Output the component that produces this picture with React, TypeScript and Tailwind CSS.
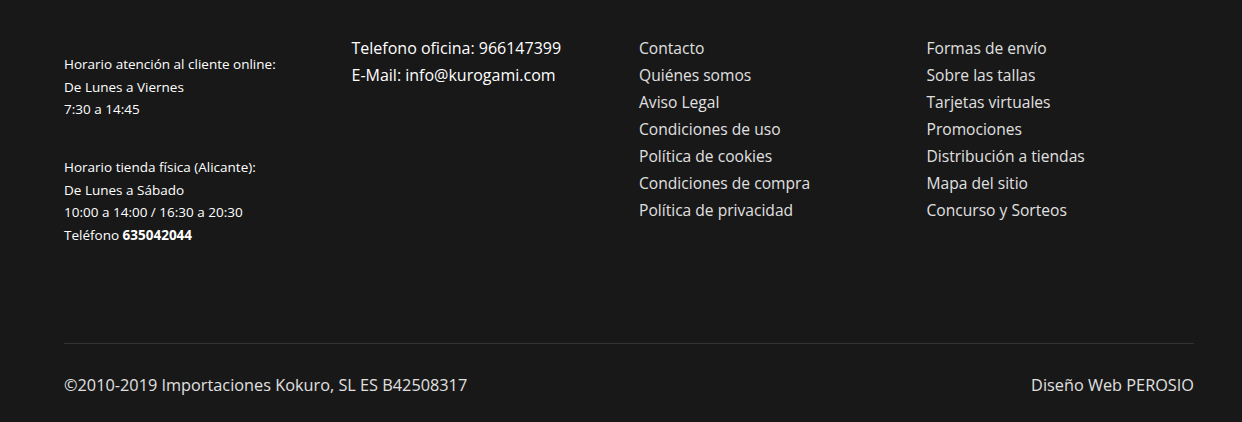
export default function App() {
  const legal = [
    "Contacto",
    "Quiénes somos",
    "Aviso Legal",
    "Condiciones de uso",
    "Política de cookies",
    "Condiciones de compra",
    "Política de privacidad",
  ];
  const info = [
    "Formas de envío",
    "Sobre las tallas",
    "Tarjetas virtuales",
    "Promociones",
    "Distribución a tiendas",
    "Mapa del sitio",
    "Concurso y Sorteos",
  ];

  return (
    <footer
      className="min-h-[422px] w-full bg-[#181818] text-white"
      style={{ fontFamily: '"Open Sans", "Liberation Sans", sans-serif' }}
    >
      <div className="ml-[64px] w-[1130px]">
        {/* COLUMNAS */}
        <div className="grid grid-cols-[287.5px_287.5px_287.5px_267.5px] pt-[35px] pb-[97px]">
          {/* HORARIOS */}
          <div className="pt-[18px] text-[13.5px] leading-[22.5px] text-white">
            <p>Horario atención al cliente online:</p>
            <p>De Lunes a Viernes</p>
            <p>7:30 a 14:45</p>
            <p className="mt-[35.5px]">Horario tienda física (Alicante):</p>
            <p>De Lunes a Sábado</p>
            <p>10:00 a 14:00 / 16:30 a 20:30</p>
            <p>
              Teléfono <strong className="font-bold">635042044</strong>
            </p>
          </div>

          {/* CONTACTO */}
          <div className="text-[16px] leading-[27px] text-white">
            <p>Telefono oficina: 966147399</p>
            <p>E-Mail: info@kurogami.com</p>
          </div>

          {/* ENLACES */}
          <ul className="text-[15.6px] leading-[27px] text-[#e0e0e0]">
            {legal.map((item) => (
              <li key={item}>
                <a href="#">{item}</a>
              </li>
            ))}
          </ul>

          <ul className="text-[15.6px] leading-[27px] text-[#e0e0e0]">
            {info.map((item) => (
              <li key={item}>
                <a href="#">{item}</a>
              </li>
            ))}
          </ul>
        </div>

        {/* PIE */}
        <div className="border-t border-[#333333]" />
        <div className="flex items-center justify-between pt-[30px] text-[16.3px] leading-[22px] text-[#e0e0e0]">
          <span>©2010-2019 Importaciones Kokuro, SL ES B42508317</span>
          <span>Diseño Web PEROSIO</span>
        </div>
      </div>
    </footer>
  );
}
